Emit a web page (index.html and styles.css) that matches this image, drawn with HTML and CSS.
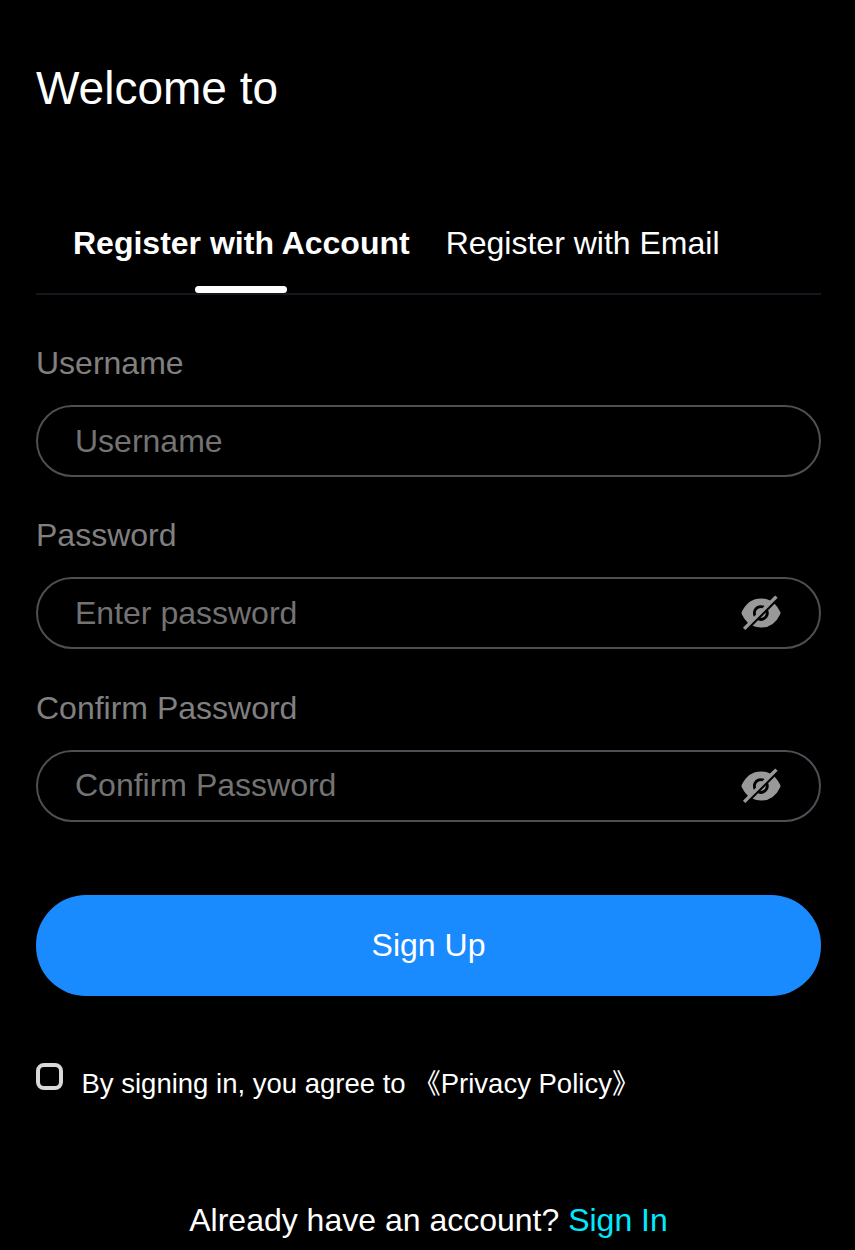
FILE: index.html
```html
<!DOCTYPE html>
<html lang="en">
<head>
    <meta charset="UTF-8">
    <meta name="viewport" content="width=device-width, initial-scale=1.0">
    <title>Register</title>
    <link rel="stylesheet" href="styles.css">
</head>
<body>
    <div class="register-container">
        <h1 class="title">Welcome to</h1>

        <div class="tabs">
            <div class="tab active">Register with Account</div>
            <div class="tab">Register with Email</div>
        </div>

        <div class="form-item">
            <label class="form-label" for="username">Username</label>
            <div class="input-wrap">
                <input class="form-input" id="username" type="text" placeholder="Username">
            </div>
        </div>

        <div class="form-item">
            <label class="form-label" for="password">Password</label>
            <div class="input-wrap">
                <input class="form-input" id="password" type="password" placeholder="Enter password">
                <svg class="eye-icon" viewBox="64 64 896 896" aria-hidden="true"><path d="M508 624a112 112 0 0 0 112-112c0-3.28-.15-6.53-.43-9.74L498.26 623.57c3.21.28 6.45.43 9.74.43zm370.72-458.44L836 122.88a8 8 0 0 0-11.31 0L715.37 232.23Q624.91 186 512 186q-288.3 0-430.2 300.3a60.3 60.3 0 0 0 0 51.5q56.7 119.43 136.55 191.45L112.56 835a8 8 0 0 0 0 11.31L155.25 889a8 8 0 0 0 11.31 0l712.16-712.12a8 8 0 0 0 0-11.32zM332 512a176 176 0 0 1 258.88-155.28l-48.62 48.62a112.08 112.08 0 0 0-140.92 140.92l-48.62 48.62A175.09 175.09 0 0 1 332 512z"/><path d="M942.2 486.2Q889.4 375 816.51 304.85L672.37 449A176.08 176.08 0 0 1 445 676.37L322.74 798.63Q407.82 838 512 838q288.3 0 430.2-300.3a60.29 60.29 0 0 0 0-51.5z"/></svg>
            </div>
        </div>

        <div class="form-item">
            <label class="form-label" for="confirm">Confirm Password</label>
            <div class="input-wrap">
                <input class="form-input" id="confirm" type="password" placeholder="Confirm Password">
                <svg class="eye-icon" viewBox="64 64 896 896" aria-hidden="true"><path d="M508 624a112 112 0 0 0 112-112c0-3.28-.15-6.53-.43-9.74L498.26 623.57c3.21.28 6.45.43 9.74.43zm370.72-458.44L836 122.88a8 8 0 0 0-11.31 0L715.37 232.23Q624.91 186 512 186q-288.3 0-430.2 300.3a60.3 60.3 0 0 0 0 51.5q56.7 119.43 136.55 191.45L112.56 835a8 8 0 0 0 0 11.31L155.25 889a8 8 0 0 0 11.31 0l712.16-712.12a8 8 0 0 0 0-11.32zM332 512a176 176 0 0 1 258.88-155.28l-48.62 48.62a112.08 112.08 0 0 0-140.92 140.92l-48.62 48.62A175.09 175.09 0 0 1 332 512z"/><path d="M942.2 486.2Q889.4 375 816.51 304.85L672.37 449A176.08 176.08 0 0 1 445 676.37L322.74 798.63Q407.82 838 512 838q288.3 0 430.2-300.3a60.29 60.29 0 0 0 0-51.5z"/></svg>
            </div>
        </div>

        <button class="submit-btn">Sign Up</button>

        <div class="agreement">
            <span class="checkbox"></span>
            <span class="agreement-text">By signing in, you agree to <span class="policy">《Privacy Policy》</span></span>
        </div>

        <div class="footer-link">Already have an account? <a href="#">Sign In</a></div>
    </div>
</body>
</html>
```

FILE: styles.css
```css
* {
    box-sizing: border-box;
    margin: 0;
    padding: 0;
}

html, body {
    height: 100%;
}

body {
    font-family: "Liberation Sans", Arial, "Noto Sans CJK SC", sans-serif;
    background-color: #000;
    color: #fff;
    overflow: hidden;
}

.register-container {
    padding: 60px 34px 0 36px;
}

.title {
    font-size: 46px;
    font-weight: normal;
    line-height: 56px;
    margin-bottom: 91px;
}

.tabs {
    display: flex;
    gap: 36px;
    padding: 0 37px;
    height: 88px;
    border-bottom: 2px solid #14171f;
    margin-bottom: 50px;
}

.tab {
    position: relative;
    font-size: 32px;
    line-height: 72px;
    height: 72px;
}

.tab.active {
    font-weight: bold;
}

.tab.active::after {
    content: "";
    position: absolute;
    left: 50%;
    top: 79px;
    width: 92px;
    height: 7px;
    margin-left: -46px;
    border-radius: 4px;
    background-color: #fff;
}

.form-item {
    margin-bottom: 40.4px;
}

.form-label {
    display: block;
    font-size: 32px;
    line-height: 36px;
    color: #808080;
    margin-bottom: 24px;
}

.input-wrap {
    display: flex;
    align-items: center;
    height: 72px;
    padding: 0 38px 0 37px;
    border: 2px solid #4e4e55;
    border-radius: 36px;
}

.form-input {
    flex: 1;
    min-width: 0;
    background: transparent;
    border: none;
    outline: none;
    color: #fff;
    font-family: inherit;
    font-size: 32px;
}

.form-input::placeholder {
    color: #737373;
    opacity: 1;
}

.eye-icon {
    width: 40px;
    height: 40px;
    fill: #999;
    flex-shrink: 0;
}

.submit-btn {
    display: block;
    width: 100%;
    height: 101px;
    margin-top: 73px;
    border: none;
    border-radius: 50px;
    background-color: #1a8aff;
    color: #fff;
    font-family: inherit;
    font-size: 32px;
}

.agreement {
    display: flex;
    align-items: flex-start;
    margin-top: 67px;
}

.checkbox {
    width: 27px;
    height: 27px;
    border: 4px solid #d9d9d9;
    border-radius: 8px;
    margin-right: 18.5px;
}

.agreement-text {
    font-size: 27.5px;
    line-height: 38px;
    margin-top: 2px;
}

.footer-link {
    margin-top: 97px;
    text-align: center;
    font-size: 32px;
    line-height: 40px;
}

.footer-link a {
    color: #00eaff;
    text-decoration: none;
}
```
